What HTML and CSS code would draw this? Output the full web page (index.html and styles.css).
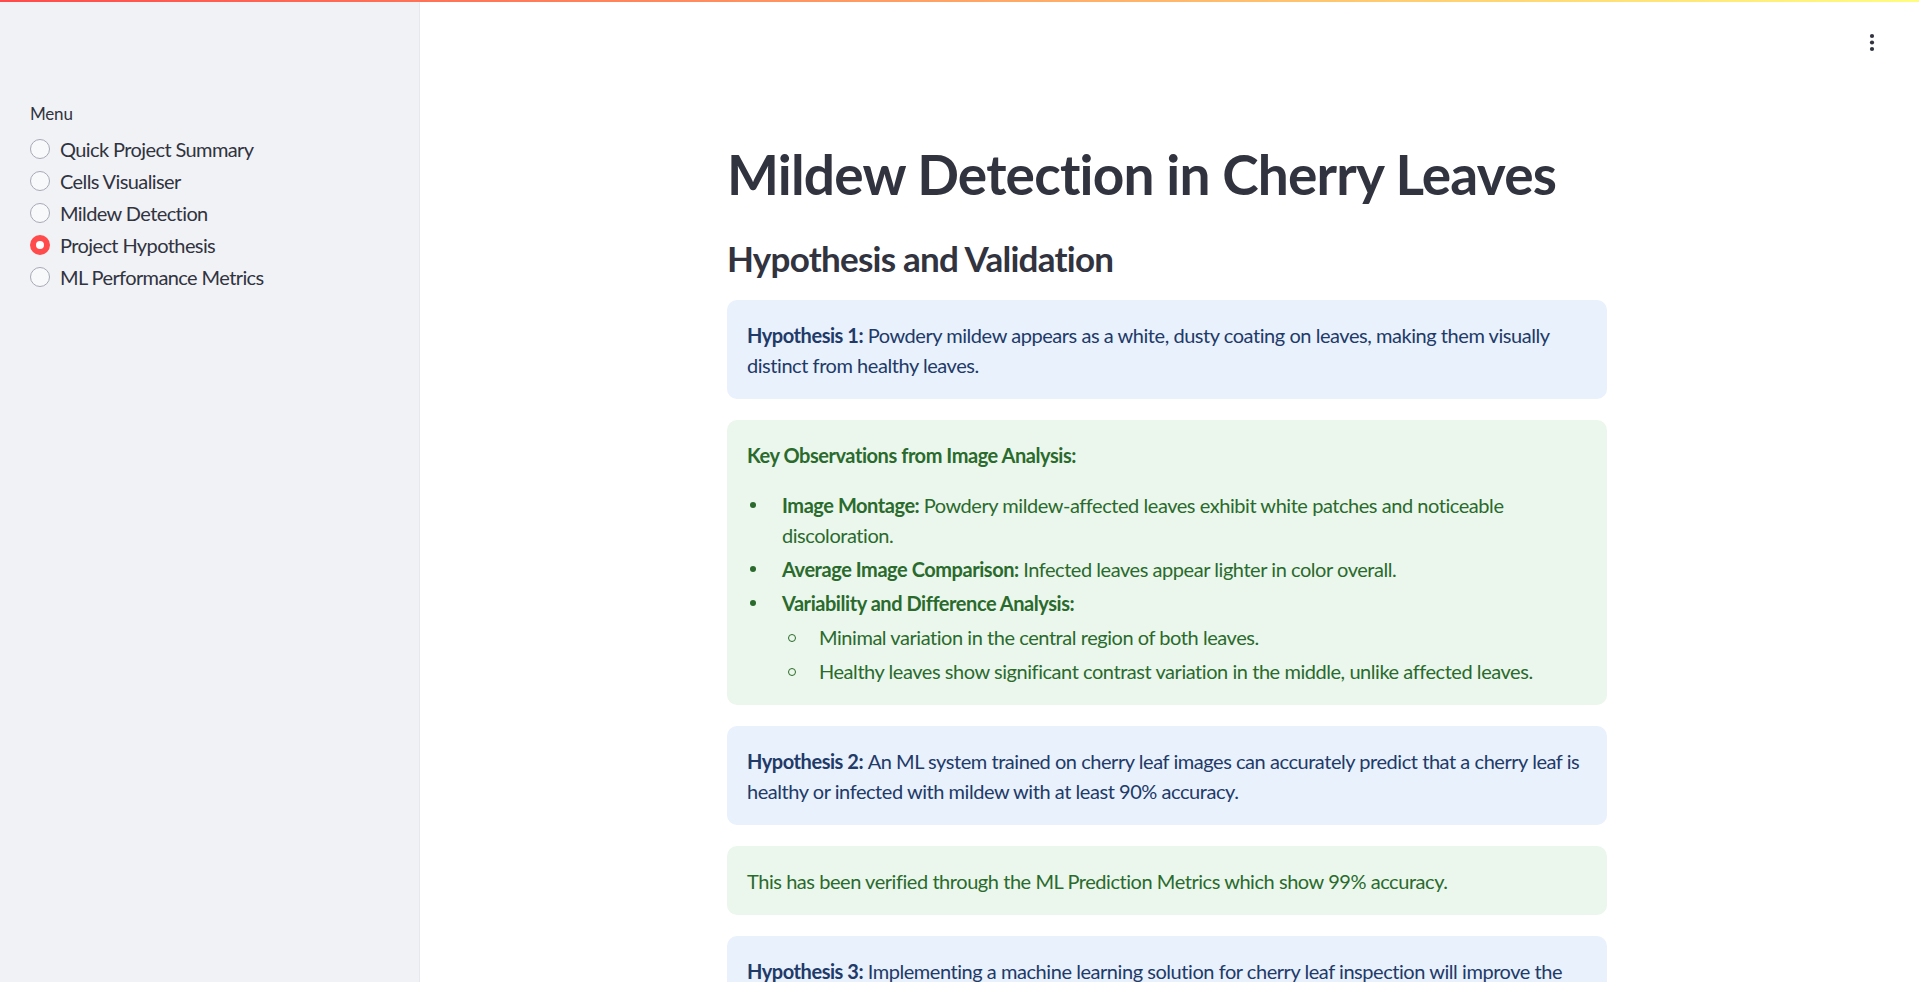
FILE: index.html
```html
<!DOCTYPE html>
<html lang="en">
<head>
<meta charset="utf-8">
<title>Mildew Detection in Cherry Leaves</title>
<link rel="stylesheet" href="styles.css">
</head>
<body>
<div class="decoration"></div>
<div class="app">
  <aside class="sidebar">
    <div class="menu-label">Menu</div>
    <div class="radio-group">
      <label class="radio"><span class="dot"></span><span class="radio-text">Quick Project Summary</span></label>
      <label class="radio"><span class="dot"></span><span class="radio-text">Cells Visualiser</span></label>
      <label class="radio"><span class="dot"></span><span class="radio-text">Mildew Detection</span></label>
      <label class="radio checked"><span class="dot"></span><span class="radio-text">Project Hypothesis</span></label>
      <label class="radio"><span class="dot"></span><span class="radio-text">ML Performance Metrics</span></label>
    </div>
  </aside>
  <main class="main">
    <div class="toolbar">
      <button class="kebab" aria-label="Main menu">
        <svg width="6" height="20" viewBox="0 0 6 20"><circle cx="3" cy="3" r="2.1" fill="#31333F"/><circle cx="3" cy="9.5" r="2.1" fill="#31333F"/><circle cx="3" cy="16" r="2.1" fill="#31333F"/></svg>
      </button>
    </div>
    <div class="block">
      <h1 class="title">Mildew Detection in Cherry Leaves</h1>
      <h3 class="subheader">Hypothesis and Validation</h3>

      <div class="alert info">
        <p><strong>Hypothesis 1: </strong>Powdery mildew appears as a white, dusty coating on leaves, making them visually distinct from healthy leaves.</p>
      </div>

      <div class="alert success">
        <p class="lead"><strong>Key Observations from Image Analysis:</strong></p>
        <ul class="list">
          <li><strong>Image Montage: </strong>Powdery mildew-affected leaves exhibit white patches and noticeable discoloration.</li>
          <li><strong>Average Image Comparison: </strong>Infected leaves appear lighter in color overall.</li>
          <li><strong>Variability and Difference Analysis:</strong>
            <ul class="sublist">
              <li>Minimal variation in the central region of both leaves.</li>
              <li>Healthy leaves show significant contrast variation in the middle, unlike affected leaves.</li>
            </ul>
          </li>
        </ul>
      </div>

      <div class="alert info">
        <p><strong>Hypothesis 2: </strong>An ML system trained on cherry leaf images can accurately predict that a cherry leaf is healthy or infected with mildew with at least 90% accuracy.</p>
      </div>

      <div class="alert success">
        <p>This has been verified through the ML Prediction Metrics which show 99% accuracy.</p>
      </div>

      <div class="alert info">
        <p><strong>Hypothesis 3: </strong>Implementing a machine learning solution for cherry leaf inspection will improve the efficiency of the inspection process compared to manual inspection.</p>
      </div>
    </div>
  </main>
</div>
</body>
</html>
```
FILE: styles.css
```css
* { box-sizing: border-box; }

html, body {
  margin: 0;
  padding: 0;
  height: 100%;
  overflow: hidden;
  background: #ffffff;
  font-family: "Lato", "Source Sans Pro", "Noto Sans", sans-serif;
  color: #31333F;
}

.decoration {
  position: fixed;
  top: 0;
  left: 0;
  right: 0;
  height: 2px;
  background: linear-gradient(90deg, #ff4b4b, #fffd80);
  z-index: 10;
}

.app {
  display: flex;
  height: 100vh;
}

.sidebar {
  flex: 0 0 420px;
  width: 420px;
  height: 100vh;
  background: #f0f2f6;
  border-right: 1px solid #e6e8ee;
  padding: 103px 30px 0 30px;
}

.menu-label {
  font-size: 17px;
  line-height: 22px;
  height: 22px;
  color: #31333F;
  letter-spacing: -0.2px;
}

.radio-group {
  margin-top: 8px;
  display: flex;
  flex-direction: column;
}

.radio {
  display: flex;
  align-items: center;
  height: 32px;
  gap: 10px;
  cursor: pointer;
}

.dot {
  flex: 0 0 20px;
  width: 20px;
  height: 20px;
  border-radius: 50%;
  border: 1px solid #a7aab5;
  background: #f8f9fb;
}

.radio.checked .dot {
  border: 6px solid #ff4b4b;
  background: #ffffff;
}

.radio-text {
  font-size: 20px;
  line-height: 30px;
  letter-spacing: -0.6px;
  color: #31333F;
}

.main {
  flex: 1 1 auto;
  position: relative;
  padding-right: 5px;
  overflow: hidden;
}

.toolbar {
  position: absolute;
  top: 33px;
  right: 44px;
}

.kebab {
  border: 0;
  background: transparent;
  padding: 0;
  width: 6px;
  height: 20px;
  display: block;
}

.block {
  width: 880px;
  margin: 0 auto;
  padding-top: 141px;
  display: flex;
  flex-direction: column;
  gap: 21px;
}

.title {
  margin: 0 0 9px 0;
  font-size: 55px;
  line-height: 66px;
  font-weight: 700;
  letter-spacing: -0.8px;
  color: #31333F;
}

.subheader {
  margin: 0 0 0 0;
  font-size: 35px;
  line-height: 42px;
  font-weight: 700;
  letter-spacing: -0.75px;
  color: #31333F;
}

.alert {
  border-radius: 10px;
  padding: 19.5px 20px;
  font-size: 20px;
  line-height: 30px;
  letter-spacing: -0.45px;
}

.alert p { margin: 0; }

.alert strong { font-weight: 700; }

.info {
  background: #e9f1fc;
  color: #213a68;
}

.success {
  background: #ebf7ec;
  color: #2a6a2c;
}

.lead { margin-bottom: 20px !important; }

.list, .sublist {
  list-style: none;
  margin: 0;
  padding: 0;
}

.list > li {
  position: relative;
  padding-left: 35px;
  margin-top: 4px;
}

.list > li:first-child { margin-top: 0; }

.list > li::before {
  content: "";
  position: absolute;
  left: 3px;
  top: 12px;
  width: 6px;
  height: 6px;
  border-radius: 50%;
  background: #2a6a2c;
}

.sublist {
  margin-top: 4px;
}

.sublist > li {
  position: relative;
  padding-left: 37px;
  margin-top: 4px;
}

.sublist > li:first-child { margin-top: 0; }

.sublist > li::before {
  content: "";
  position: absolute;
  left: 6px;
  top: 12px;
  width: 6px;
  height: 6px;
  border-radius: 50%;
  border: 1px solid #2a6a2c;
  background: transparent;
}
```
